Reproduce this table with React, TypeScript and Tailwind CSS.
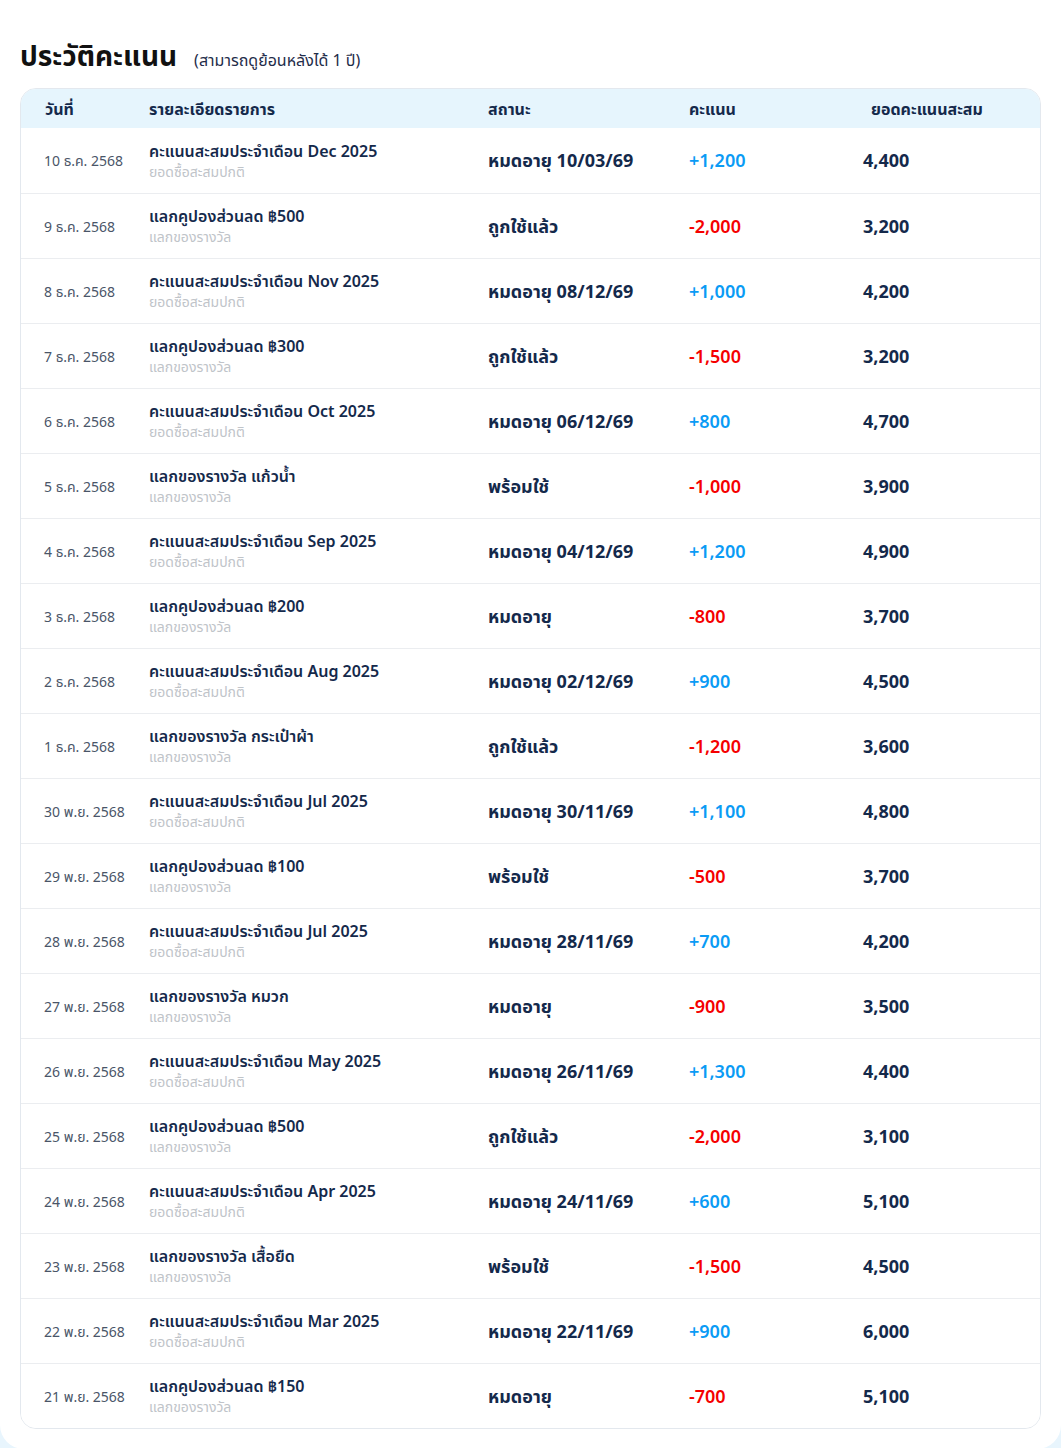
import React from "react";

type Row = { date: string; title: string; sub: string; status: string; pts: string; bal: string };

const rows: Row[] = [
  { date: "10 ธ.ค. 2568", title: "คะแนนสะสมประจำเดือน Dec 2025", sub: "ยอดซื้อสะสมปกติ", status: "หมดอายุ 10/03/69", pts: "+1,200", bal: "4,400" },
  { date: "9 ธ.ค. 2568", title: "แลกคูปองส่วนลด ฿500", sub: "แลกของรางวัล", status: "ถูกใช้แล้ว", pts: "-2,000", bal: "3,200" },
  { date: "8 ธ.ค. 2568", title: "คะแนนสะสมประจำเดือน Nov 2025", sub: "ยอดซื้อสะสมปกติ", status: "หมดอายุ 08/12/69", pts: "+1,000", bal: "4,200" },
  { date: "7 ธ.ค. 2568", title: "แลกคูปองส่วนลด ฿300", sub: "แลกของรางวัล", status: "ถูกใช้แล้ว", pts: "-1,500", bal: "3,200" },
  { date: "6 ธ.ค. 2568", title: "คะแนนสะสมประจำเดือน Oct 2025", sub: "ยอดซื้อสะสมปกติ", status: "หมดอายุ 06/12/69", pts: "+800", bal: "4,700" },
  { date: "5 ธ.ค. 2568", title: "แลกของรางวัล แก้วน้ำ", sub: "แลกของรางวัล", status: "พร้อมใช้", pts: "-1,000", bal: "3,900" },
  { date: "4 ธ.ค. 2568", title: "คะแนนสะสมประจำเดือน Sep 2025", sub: "ยอดซื้อสะสมปกติ", status: "หมดอายุ 04/12/69", pts: "+1,200", bal: "4,900" },
  { date: "3 ธ.ค. 2568", title: "แลกคูปองส่วนลด ฿200", sub: "แลกของรางวัล", status: "หมดอายุ", pts: "-800", bal: "3,700" },
  { date: "2 ธ.ค. 2568", title: "คะแนนสะสมประจำเดือน Aug 2025", sub: "ยอดซื้อสะสมปกติ", status: "หมดอายุ 02/12/69", pts: "+900", bal: "4,500" },
  { date: "1 ธ.ค. 2568", title: "แลกของรางวัล กระเป๋าผ้า", sub: "แลกของรางวัล", status: "ถูกใช้แล้ว", pts: "-1,200", bal: "3,600" },
  { date: "30 พ.ย. 2568", title: "คะแนนสะสมประจำเดือน Jul 2025", sub: "ยอดซื้อสะสมปกติ", status: "หมดอายุ 30/11/69", pts: "+1,100", bal: "4,800" },
  { date: "29 พ.ย. 2568", title: "แลกคูปองส่วนลด ฿100", sub: "แลกของรางวัล", status: "พร้อมใช้", pts: "-500", bal: "3,700" },
  { date: "28 พ.ย. 2568", title: "คะแนนสะสมประจำเดือน Jul 2025", sub: "ยอดซื้อสะสมปกติ", status: "หมดอายุ 28/11/69", pts: "+700", bal: "4,200" },
  { date: "27 พ.ย. 2568", title: "แลกของรางวัล หมวก", sub: "แลกของรางวัล", status: "หมดอายุ", pts: "-900", bal: "3,500" },
  { date: "26 พ.ย. 2568", title: "คะแนนสะสมประจำเดือน May 2025", sub: "ยอดซื้อสะสมปกติ", status: "หมดอายุ 26/11/69", pts: "+1,300", bal: "4,400" },
  { date: "25 พ.ย. 2568", title: "แลกคูปองส่วนลด ฿500", sub: "แลกของรางวัล", status: "ถูกใช้แล้ว", pts: "-2,000", bal: "3,100" },
  { date: "24 พ.ย. 2568", title: "คะแนนสะสมประจำเดือน Apr 2025", sub: "ยอดซื้อสะสมปกติ", status: "หมดอายุ 24/11/69", pts: "+600", bal: "5,100" },
  { date: "23 พ.ย. 2568", title: "แลกของรางวัล เสื้อยืด", sub: "แลกของรางวัล", status: "พร้อมใช้", pts: "-1,500", bal: "4,500" },
  { date: "22 พ.ย. 2568", title: "คะแนนสะสมประจำเดือน Mar 2025", sub: "ยอดซื้อสะสมปกติ", status: "หมดอายุ 22/11/69", pts: "+900", bal: "6,000" },
  { date: "21 พ.ย. 2568", title: "แลกคูปองส่วนลด ฿150", sub: "แลกของรางวัล", status: "หมดอายุ", pts: "-700", bal: "5,100" },
];

export default function App() {
  return (
    <div
      className="min-h-[1448px] bg-[#e8f5fd]"
      style={{ fontFamily: '"Noto Sans", "Noto Sans Thai", "Noto Sans Thai UI", sans-serif' }}
    >
      <div className="bg-white rounded-b-[24px] px-5 pt-[35px] pb-[20px]">
        <div className="flex items-baseline gap-[17px] h-[40px]">
          <h1 className="text-[28px] font-bold text-[#111] leading-[40px]">ประวัติคะแนน</h1>
          <span className="text-[16px] text-[#1f2d4a]">(สามารถดูย้อนหลังได้ 1 ปี)</span>
        </div>
        <div className="mt-[13px] border border-[#e3e8ee] rounded-[16px] overflow-hidden">
          <div className="grid grid-cols-[104px_339px_201px_175px_1fr] px-6 h-[39px] items-center bg-[#e6f5fd] text-[16px] font-bold text-[#14294b]">
            <div>วันที่</div>
            <div>รายละเอียดรายการ</div>
            <div>สถานะ</div>
            <div>คะแนน</div>
            <div className="pl-[7px]">ยอดคะแนนสะสม</div>
          </div>
          {rows.map((r, i) => (
            <div
              key={i}
              className={
                "grid grid-cols-[104px_339px_201px_175px_1fr] px-6 h-[65px] items-center bg-white " +
                (i > 0 ? "border-t border-[#ebedf0]" : "")
              }
            >
              <div className="text-[14px] text-[#4a5568] -ml-px">{r.date}</div>
              <div className="flex flex-col">
                <span className="text-[16px] font-semibold text-[#14294b] leading-[21px]">{r.title}</span>
                <span className="text-[14px] text-[#c0c4c9] leading-[19px]">{r.sub}</span>
              </div>
              <div className="text-[18px] font-bold text-[#14294b]">{r.status}</div>
              <div
                className={
                  "text-[18px] font-semibold " + (r.pts.startsWith("+") ? "text-[#0a9bf5]" : "text-[#f50000]")
                }
              >
                {r.pts}
              </div>
              <div className="text-[18px] font-bold text-[#14294b] -ml-px">{r.bal}</div>
            </div>
          ))}
        </div>
      </div>
    </div>
  );
}
